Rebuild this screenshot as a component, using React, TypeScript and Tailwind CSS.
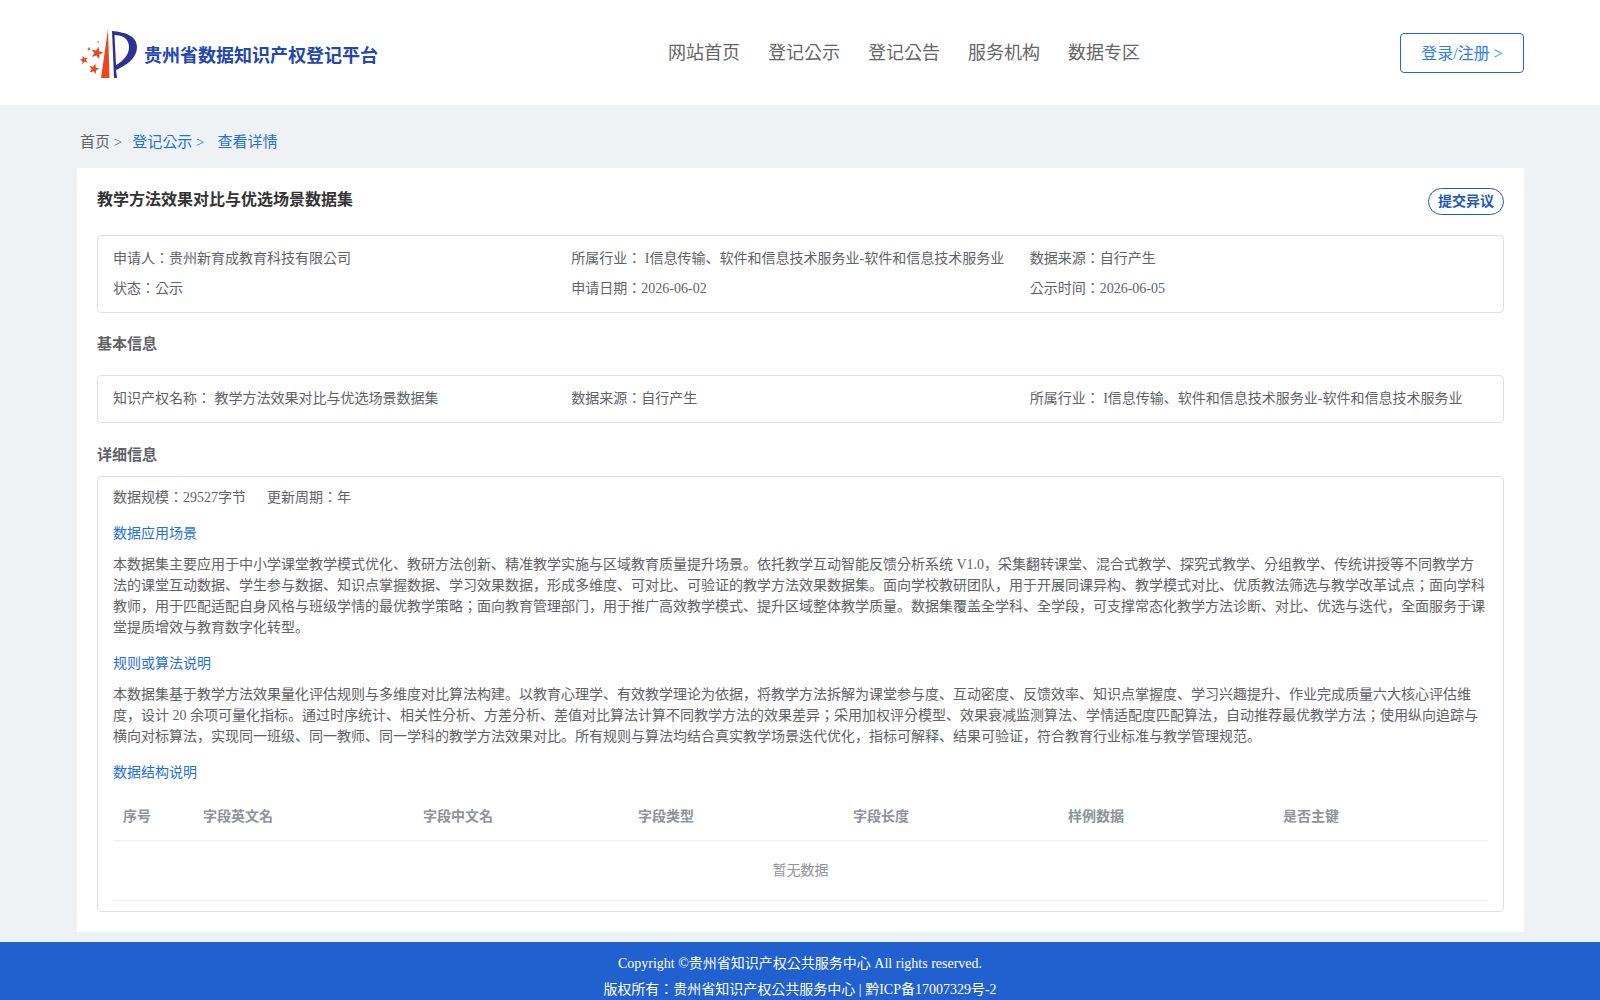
import React from "react";

const P1 = "本数据集主要应用于中小学课堂教学模式优化、教研方法创新、精准教学实施与区域教育质量提升场景。依托教学互动智能反馈分析系统 V1.0，采集翻转课堂、混合式教学、探究式教学、分组教学、传统讲授等不同教学方法的课堂互动数据、学生参与数据、知识点掌握数据、学习效果数据，形成多维度、可对比、可验证的教学方法效果数据集。面向学校教研团队，用于开展同课异构、教学模式对比、优质教法筛选与教学改革试点；面向学科教师，用于匹配适配自身风格与班级学情的最优教学策略；面向教育管理部门，用于推广高效教学模式、提升区域整体教学质量。数据集覆盖全学科、全学段，可支撑常态化教学方法诊断、对比、优选与迭代，全面服务于课堂提质增效与教育数字化转型。";
const P2 = "本数据集基于教学方法效果量化评估规则与多维度对比算法构建。以教育心理学、有效教学理论为依据，将教学方法拆解为课堂参与度、互动密度、反馈效率、知识点掌握度、学习兴趣提升、作业完成质量六大核心评估维度，设计 20 余项可量化指标。通过时序统计、相关性分析、方差分析、差值对比算法计算不同教学方法的效果差异；采用加权评分模型、效果衰减监测算法、学情适配度匹配算法，自动推荐最优教学方法；使用纵向追踪与横向对标算法，实现同一班级、同一教师、同一学科的教学方法效果对比。所有规则与算法均结合真实教学场景迭代优化，指标可解释、结果可验证，符合教育行业标准与教学管理规范。";

function starPoints(cx: number, cy: number, r: number, rot: number) {
  const pts: string[] = [];
  for (let i = 0; i < 10; i++) {
    const rad = i % 2 === 0 ? r : r * 0.42;
    const a = ((-90 + rot + i * 36) * Math.PI) / 180;
    pts.push(`${(cx + rad * Math.cos(a)).toFixed(1)},${(cy + rad * Math.sin(a)).toFixed(1)}`);
  }
  return pts.join(" ");
}

function Logo() {
  return (
    <svg width="60" height="55" viewBox="80 25 60 55" className="shrink-0 mt-[3px]">
      <path d="M108 28 L101 77 L109.5 77 Z" fill="#e8481c" />
      <path
        d="M112 30 C125 31 137 35 137 46 C137 57 127 64 116 69 L117 77 L114 77 Z M114.5 34 C123 34 129 38 129 46 C129 54 123 60 116 64 Z"
        fill="#2b3190"
        fillRule="evenodd"
      />
      <polygon points={starPoints(97, 52, 6.5, 15)} fill="#e8481c" />
      <polygon points={starPoints(84, 59, 4.5, -15)} fill="#e8481c" />
      <polygon points={starPoints(94, 68, 5.5, 15)} fill="#e8481c" />
      <circle cx="89" cy="48" r="1.4" fill="#ee6a44" />
      <circle cx="98" cy="41" r="1" fill="#f08a6c" />
    </svg>
  );
}

function Section({ children }: { children: React.ReactNode }) {
  return <div className="text-[15px] leading-[21px] font-bold text-[#606266]">{children}</div>;
}

export default function App() {
  const cols = ["字段英文名", "字段中文名", "字段类型", "字段长度", "样例数据", "是否主键"];
  return (
    <div className="min-h-[1000px] bg-[#eef2f5] font-['Liberation_Serif','Noto_Sans_CJK_KR',serif] text-[14px] text-[#606266]">
      <header className="h-[105px] bg-white flex items-center pl-[80px] pr-[76px]">
        <div className="flex items-center w-[400px] -mt-[1px]">
          <Logo />
          <span className="ml-[4px] mt-[8px] text-[18px] font-bold text-[#2346b0]">贵州省数据知识产权登记平台</span>
        </div>
        <nav className="flex-1 flex gap-[28px] pl-[188px] text-[18px] text-[#666] mt-[1px]">
          <span>网站首页</span><span>登记公示</span><span>登记公告</span><span>服务机构</span><span>数据专区</span>
        </nav>
        <div className="w-[124px] h-[40px] border border-[#1f67dc] rounded-[4px] flex items-center justify-center text-[16px] leading-[24px] pt-[2px] text-[#2f7de9]">登录/注册 &gt;</div>
      </header>

      <div className="px-[80px] h-[63px] flex items-center text-[15px] pt-[11px]">
        <span>首页 &gt;</span>
        <span className="ml-[10px] text-[#1f6fe0]">登记公示 &gt;</span>
        <span className="ml-[13px] text-[#1f6fe0]">查看详情</span>
      </div>

      <main className="mx-[77px] w-[1447px] bg-white px-[20px] pt-[20px] h-[764px]">
        <div className="flex justify-between items-start h-[47px]">
          <h1 className="text-[16px] leading-[24px] font-bold text-[#333]">教学方法效果对比与优选场景数据集</h1>
          <div className="h-[27px] w-[76px] rounded-[14px] border border-[#2158b8] flex items-center justify-center text-[14px] font-bold text-[#2158b8]">提交异议</div>
        </div>

        <div className="border border-[#dcdfe6] rounded-[4px] px-[15px] h-[78px] grid grid-cols-3 items-center content-center gap-y-[9px] leading-[21px] pb-[1px]">
          <div>申请人：贵州新育成教育科技有限公司</div>
          <div>所属行业： I信息传输、软件和信息技术服务业-软件和信息技术服务业</div>
          <div>数据来源：自行产生</div>
          <div>状态：公示</div>
          <div>申请日期：2026-06-02</div>
          <div>公示时间：2026-06-05</div>
        </div>

        <div className="mt-[21px] mb-[20px]"><Section>基本信息</Section></div>

        <div className="border border-[#dcdfe6] rounded-[4px] px-[15px] h-[48px] grid grid-cols-3 items-center leading-[21px] pb-[2px]">
          <div>知识产权名称： 教学方法效果对比与优选场景数据集</div>
          <div>数据来源：自行产生</div>
          <div>所属行业： I信息传输、软件和信息技术服务业-软件和信息技术服务业</div>
        </div>

        <div className="mt-[22px] mb-[10px]"><Section>详细信息</Section></div>

        <div className="border border-[#dcdfe6] rounded-[4px] px-[15px] pt-[10px] h-[436px]">
          <div className="leading-[21px] flex gap-[21px]"><span>数据规模：29527字节</span><span>更新周期：年</span></div>
          <div className="mt-[15px] leading-[21px] text-[#1f6fe0]">数据应用场景</div>
          <p className="mt-[10px] leading-[21px]">{P1}</p>
          <div className="mt-[15px] leading-[21px] text-[#1f6fe0]">规则或算法说明</div>
          <p className="mt-[10px] leading-[21px]">{P2}</p>
          <div className="mt-[15px] leading-[21px] text-[#1f6fe0]">数据结构说明</div>
          <table className="mt-[11px] w-full table-fixed">
            <thead>
              <tr className="border-b border-[#ebeef5] h-[46px] text-[#909399] font-bold">
                <th className="w-[80px] pl-[10px] text-left">序号</th>
                <th className="w-[220px] pl-[10px] text-left">{cols[0]}</th>
                {cols.slice(1).map((c) => <th key={c} className="pl-[10px] text-left">{c}</th>)}
              </tr>
            </thead>
            <tbody>
              <tr className="border-b border-[#ebeef5] h-[60px]">
                <td colSpan={7} className="text-center text-[#909399]">暂无数据</td>
              </tr>
            </tbody>
          </table>
        </div>
      </main>

      <footer className="mt-[10px] h-[58px] bg-[#2060cf] text-white text-center text-[14px] leading-[26px] pt-[9px] overflow-hidden">
        <div>Copyright ©贵州省知识产权公共服务中心 All rights reserved.</div>
        <div>版权所有：贵州省知识产权公共服务中心 | 黔ICP备17007329号-2</div>
      </footer>
    </div>
  );
}
